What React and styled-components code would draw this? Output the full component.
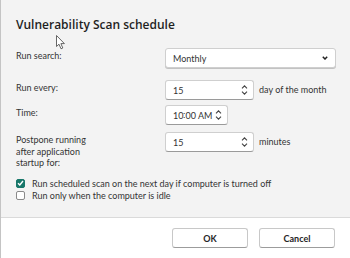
import styled, { createGlobalStyle } from 'styled-components'

const GlobalStyle = createGlobalStyle`
  html, body {
    margin: 0;
    padding: 0;
    width: 350px;
    height: 258px;
    overflow: hidden;
    background: #f3f3f3;
  }
  body {
    font-family: Lato, "Open Sans", sans-serif;
    color: #262626;
  }
`

const Chevron = ({ up }) => (
  <svg width="7" height="4" viewBox="0 0 7 4">
    <path
      d={up ? 'M1 3.3 L3.5 0.8 L6 3.3' : 'M1 0.7 L3.5 3.2 L6 0.7'}
      fill="none"
      stroke="#444"
      strokeWidth="1.1"
    />
  </svg>
)

const Spinner = () => (
  <SpinBox>
    <Chevron up />
    <Chevron />
  </SpinBox>
)

const CheckMark = () => (
  <svg width="7" height="6" viewBox="0 0 7 6">
    <path d="M1 3.2 L2.8 5 L6 1" fill="none" stroke="#fff" strokeWidth="1.4" />
  </svg>
)

const Cursor = () => (
  <svg width="10" height="15" viewBox="0 0 10 15">
    <path
      d="M0.5 0.5 L0.5 11.5 L3 9.2 L5 13.8 L6.8 13 L4.9 8.6 L8.4 8.6 Z"
      fill="#fff"
      stroke="#555"
      strokeWidth="0.9"
    />
  </svg>
)

const App = () => (
  <>
    <GlobalStyle />
    <Dialog>
      <Body>
        <Title>Vulnerability Scan schedule</Title>
        <Row $top={15}>
          <Label>Run search:</Label>
          <Select $width={171}>
            <span>Monthly</span>
            <svg width="6" height="4" viewBox="0 0 6 4">
              <path d="M0.8 0.8 L3 3 L5.2 0.8" fill="none" stroke="#222" strokeWidth="1.5" />
            </svg>
          </Select>
        </Row>
        <Row $top={12}>
          <Label>Run every:</Label>
          <Field $width={89}>
            <span>15</span>
            <Spinner />
          </Field>
          <Unit>day of the month</Unit>
        </Row>
        <Row $top={5}>
          <Label>Time:</Label>
          <Field $width={63}>
            <span>10∶00 AM</span>
            <Spinner />
          </Field>
        </Row>
        <Row $top={7}>
          <Label>
            Postpone running
            <br />
            after application
            <br />
            startup for:
          </Label>
          <Field $width={89}>
            <span>15</span>
            <Spinner />
          </Field>
          <Unit>minutes</Unit>
        </Row>
        <Checks>
          <CheckRow>
            <Box $checked>
              <CheckMark />
            </Box>
            Run scheduled scan on the next day if computer is turned off
          </CheckRow>
          <CheckRow>
            <Box />
            Run only when the computer is idle
          </CheckRow>
        </Checks>
        <CursorMark>
          <Cursor />
        </CursorMark>
      </Body>
      <Footer>
        <Button>OK</Button>
        <Button>Cancel</Button>
      </Footer>
    </Dialog>
  </>
)

const Dialog = styled.div`
  width: 350px;
  height: 258px;
  display: flex;
  flex-direction: column;
  box-sizing: border-box;
  border-left: 1px solid #c4c4c4;
`

const Body = styled.div`
  position: relative;
  flex: 1;
  min-height: 0;
  overflow: hidden;
  padding: 16px 15px 0 15px;
`

const Title = styled.h1`
  margin: 0;
  font-family: "Open Sans", sans-serif;
  font-size: 12px;
  line-height: 17px;
  font-weight: 600;
  color: #1f1f1f;
`

const Row = styled.div`
  display: flex;
  align-items: flex-start;
  margin-top: ${(p) => p.$top}px;
`

const Label = styled.div`
  width: 149px;
  flex-shrink: 0;
  font-size: 9px;
  line-height: 11.5px;
  padding-top: 2px;
  color: #333;
`

const Control = styled.div`
  box-sizing: border-box;
  flex-shrink: 0;
  width: ${(p) => p.$width}px;
  height: 20px;
  display: flex;
  align-items: center;
  justify-content: space-between;
  white-space: nowrap;
  background: #fff;
  border: 1px solid #cfcfcf;
  border-radius: 3px;
  font-size: 9px;
  color: #333;
`

const Select = styled(Control)`
  padding: 0 7px 0 7px;
  box-shadow: 0 1px 0 #c2c2c2;
`

const Field = styled(Control)`
  padding: 0 5px 0 7px;
  border-bottom-color: #9a9a9a;
`

const SpinBox = styled.div`
  display: flex;
  flex-direction: column;
  gap: 2px;
`

const Unit = styled.span`
  font-size: 9px;
  line-height: 20px;
  margin-left: 5px;
  white-space: nowrap;
  color: #333;
`

const Checks = styled.div`
  display: flex;
  flex-direction: column;
  gap: 3px;
  margin-top: 10px;
`

const CheckRow = styled.label`
  display: flex;
  align-items: center;
  gap: 7px;
  font-size: 9px;
  line-height: 9px;
  white-space: nowrap;
  color: #333;
`

const Box = styled.span`
  box-sizing: border-box;
  width: 9px;
  height: 9px;
  border-radius: 2px;
  display: flex;
  align-items: center;
  justify-content: center;
  background: ${(p) => (p.$checked ? '#18776a' : '#fff')};
  border: 1px solid ${(p) => (p.$checked ? '#18776a' : '#8a8a8a')};
`

const CursorMark = styled.div`
  position: absolute;
  left: 55px;
  top: 35px;
  line-height: 0;
`

const Footer = styled.div`
  height: 41px;
  flex-shrink: 0;
  display: flex;
  justify-content: flex-end;
  align-items: flex-start;
  gap: 11px;
  padding: 10px 15px 0 0;
  box-sizing: border-box;
  background: #fff;
  border-top: 1px solid #dadada;
`

const Button = styled.button`
  width: 76px;
  height: 20px;
  padding: 0;
  background: #fff;
  border: 1px solid #c8c8c8;
  border-bottom-color: #9c9c9c;
  border-radius: 3px;
  font-family: inherit;
  font-size: 9px;
  font-weight: 700;
  color: #262626;
`

export default App
